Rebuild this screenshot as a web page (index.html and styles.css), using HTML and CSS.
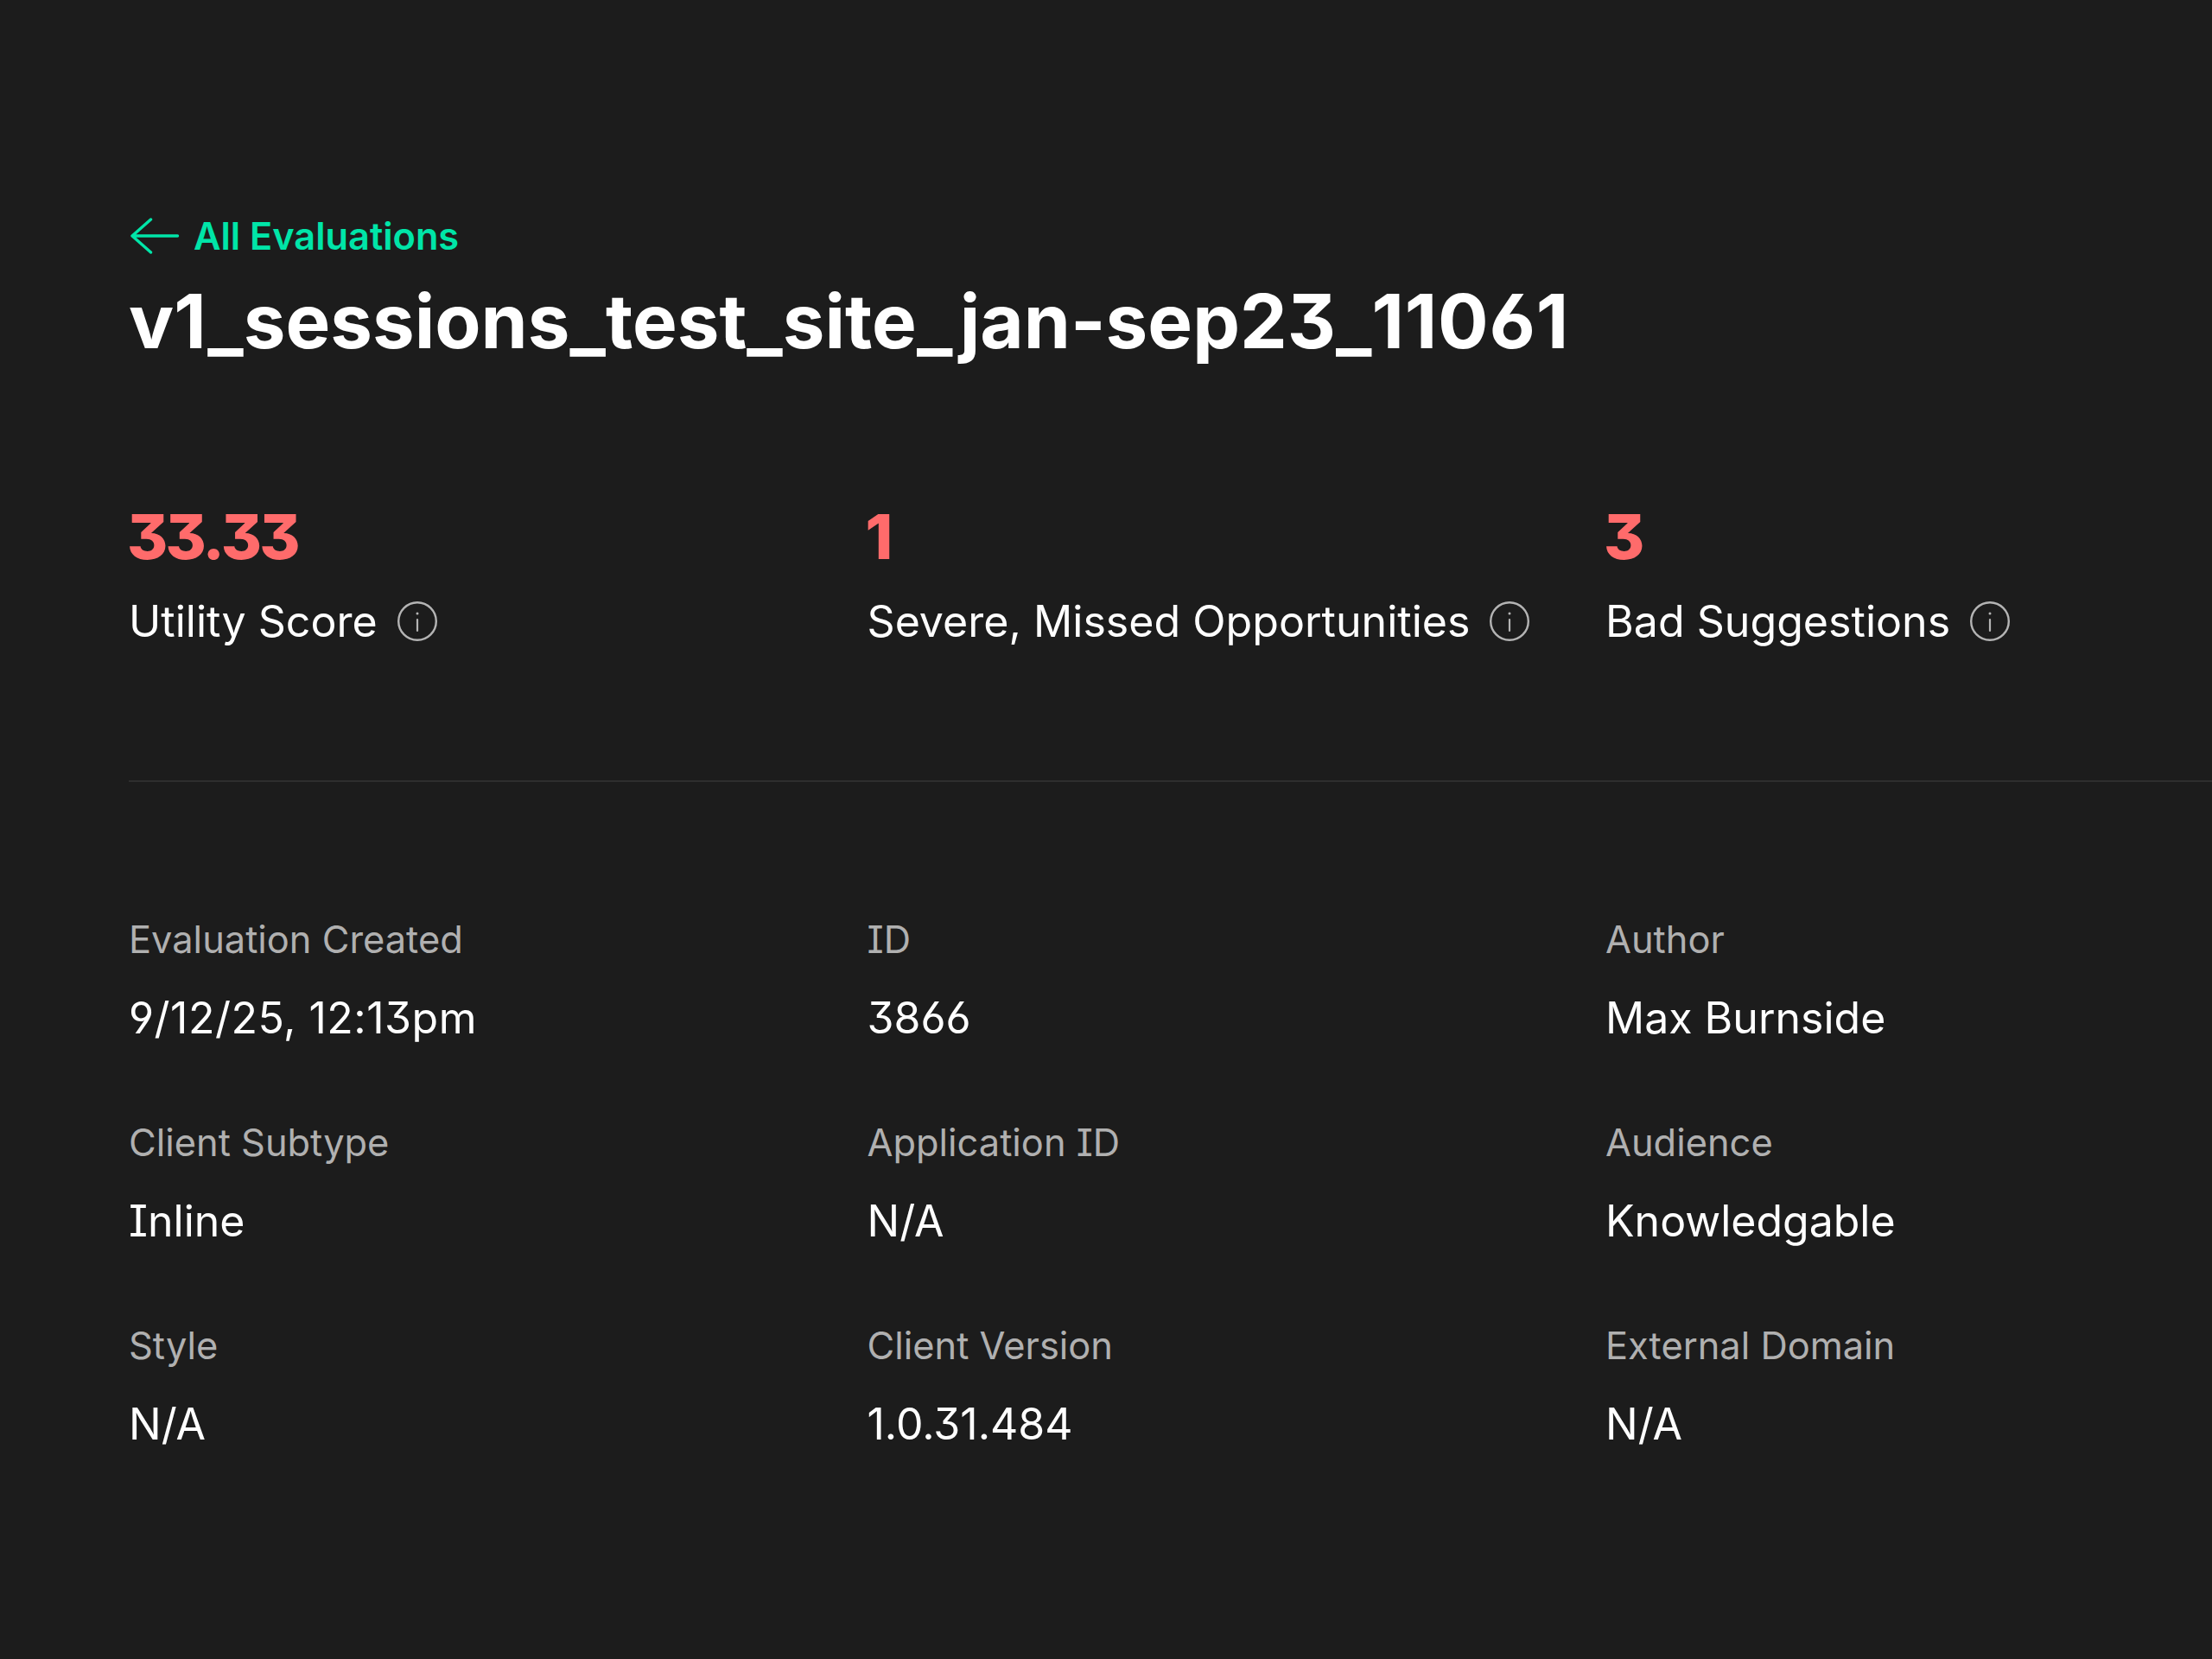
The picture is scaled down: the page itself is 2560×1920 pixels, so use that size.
FILE: index.html
```html
<!DOCTYPE html>
<html lang="en">
<head>
<meta charset="utf-8">
<title>v1_sessions_test_site_jan-sep23_11061</title>
<link rel="stylesheet" href="styles.css">
</head>
<body>
<main class="page">
  <header class="head">
    <a class="back" href="#">
      <svg class="back-icon" viewBox="0 0 60 44" fill="none" stroke="currentColor" stroke-width="3.4" stroke-linecap="round" stroke-linejoin="round"><path d="M56.5 22H4.5M25.5 3L4 22l21.500 19"/></svg>
      <span>All Evaluations</span>
    </a>
    <h1 class="title">v1_sessions_test_site_jan-sep23_<span class="title-digits">11061</span></h1>
  </header>
  <section class="scores">
    <div class="score"><div class="num">33.33</div><div class="lab">Utility Score<svg class="info" viewBox="0 0 46 46" fill="none" stroke="currentColor"><circle cx="23" cy="23" r="21.800" stroke-width="2.4"/><path d="M23 21v13" stroke-width="2.2" stroke-linecap="round"/><circle cx="23" cy="14" r="1.500" fill="currentColor" stroke="none"/></svg></div></div>
    <div class="score"><div class="num">1</div><div class="lab">Severe, Missed Opportunities<svg class="info" viewBox="0 0 46 46" fill="none" stroke="currentColor"><circle cx="23" cy="23" r="21.800" stroke-width="2.4"/><path d="M23 21v13" stroke-width="2.2" stroke-linecap="round"/><circle cx="23" cy="14" r="1.500" fill="currentColor" stroke="none"/></svg></div></div>
    <div class="score"><div class="num">3</div><div class="lab">Bad Suggestions<svg class="info" viewBox="0 0 46 46" fill="none" stroke="currentColor"><circle cx="23" cy="23" r="21.800" stroke-width="2.4"/><path d="M23 21v13" stroke-width="2.2" stroke-linecap="round"/><circle cx="23" cy="14" r="1.500" fill="currentColor" stroke="none"/></svg></div></div>
  </section>
  <section class="meta">
    <div class="item"><div class="k">Evaluation Created</div><div class="v v-date">9/12/25, 12:13pm</div></div>
    <div class="item"><div class="k">ID</div><div class="v">3866</div></div>
    <div class="item"><div class="k">Author</div><div class="v">Max Burnside</div></div>
    <div class="item"><div class="k">Client Subtype</div><div class="v">Inline</div></div>
    <div class="item"><div class="k">Application ID</div><div class="v">N/A</div></div>
    <div class="item"><div class="k">Audience</div><div class="v">Knowledgable</div></div>
    <div class="item"><div class="k">Style</div><div class="v">N/A</div></div>
    <div class="item"><div class="k">Client Version</div><div class="v">1.0.31.484</div></div>
    <div class="item"><div class="k">External Domain</div><div class="v">N/A</div></div>
  </section>
</main>
</body>
</html>
```
FILE: styles.css
```css
* { box-sizing: border-box; }
html, body { margin: 0; height: 100%; }
body { background: #1c1c1c; color: #fff; font-family: Inter, "Liberation Sans", sans-serif; font-feature-settings: "cv03" 1, "cv04" 1, "cv08" 1, "cv09" 1; }
.page { padding: 245px 0 0 149px; min-height: 1920px; }
.head { display: flex; flex-direction: column; }
.back { display: flex; align-items: center; gap: 15px; color: #00e5a8; text-decoration: none; font-size: 43.300px; font-weight: 600; line-height: 56px; height: 56px; }
.back-icon { width: 60px; height: 44px; }
.title { margin: 0; font-size: 87px; font-weight: 700; line-height: 104px; padding-top: 19px; }
.title-digits { letter-spacing: 0.800px; }
.scores { display: grid; grid-template-columns: 854.500px 854.500px 1fr; margin-top: 157px; padding-bottom: 152px; border-bottom: 2px solid #2e2e2e; }
.num { color: #ff6b6b; font-size: 72px; font-weight: 800; line-height: 80px; letter-spacing: -2.800px; margin-left: -2px; }
.lab { display: flex; align-items: center; gap: 23px; font-size: 50.100px; line-height: 64px; margin-top: 26px; }
.info { width: 46px; height: 46px; color: #b4b4b4; }
.meta { display: grid; grid-template-columns: 854.500px 854.500px 1fr; row-gap: 88px; margin-top: 158px; }
.k { color: #b0b0b0; font-size: 43.400px; line-height: 48px; }
.v { font-size: 50px; line-height: 64px; margin-top: 35px; }
.v-date { letter-spacing: 0.500px; }
```
